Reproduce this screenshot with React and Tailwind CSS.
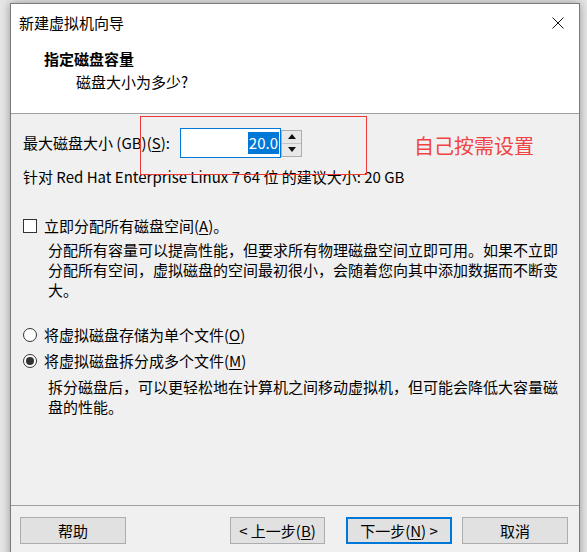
import React from "react";

const U = ({ children }) => <span className="underline underline-offset-2">{children}</span>;

function Btn({ w, children, primary, extra = "" }) {
  return (
    <div
      className={`h-[27px] ${w} ${extra} flex items-center justify-center bg-[#e1e1e1] text-[15px] leading-[20px] ${
        primary ? "border-2 border-[#0078d7]" : "border border-[#adadad]"
      }`}
    >
      {children}
    </div>
  );
}

export default function App() {
  return (
    <div className="w-[587px] h-[552px] overflow-hidden bg-[#e6e6e6] pl-[10px] pt-[3px] text-black font-['Noto_Sans_CJK_SC','Noto_Sans',sans-serif]">
      <div className="w-[570px] h-[570px] border border-[#7a7a7a] bg-[#f0f0f0] shadow-[0_0_9px_rgba(0,0,0,0.35)] flex flex-col">
        {/* header */}
        <div className="h-[110px] bg-white border-b border-[#a0a0a0] flex flex-col">
          <div className="h-[38px] flex items-center justify-between pl-[8px] pr-[15px]">
            <span className="text-[15px] leading-[20px]">新建虚拟机向导</span>
            <svg width="12" height="12" viewBox="0 0 12 12">
              <path d="M0.5 0.5 L11.5 11.5 M11.5 0.5 L0.5 11.5" stroke="#111" strokeWidth="1" />
            </svg>
          </div>
          <div className="mt-[7px] pl-[33px] text-[15px] leading-[20px] font-bold">指定磁盘容量</div>
          <div className="mt-[3px] pl-[65px] text-[15px] leading-[20px]">磁盘大小为多少?</div>
        </div>

        {/* body */}
        <div className="relative h-[391px] flex flex-col text-[15px] leading-[20px]">
          <div className="mt-[14px] h-[30px] flex items-center pl-[12px]">
            <span className="w-[157px]">
              最大磁盘大小 (GB)(<U>S</U>):
            </span>
            <div className="w-[101px] h-[30px] border border-[#0078d7] bg-white flex items-center justify-end pr-[1px]">
              <span className="bg-[#0078d7] text-white leading-[22px] px-[1px]">20.0</span>
            </div>
            <div className="w-[21px] h-[27px] border border-[#adadad] bg-[#e8e8e8] flex flex-col">
              <div className="flex-1 flex items-center justify-center border-b border-[#c4c4c4]">
                <svg width="8" height="5" viewBox="0 0 8 5">
                  <path d="M0 5 L4 0 L8 5 Z" fill="#111" />
                </svg>
              </div>
              <div className="flex-1 flex items-center justify-center">
                <svg width="8" height="5" viewBox="0 0 8 5">
                  <path d="M0 0 L8 0 L4 5 Z" fill="#111" />
                </svg>
              </div>
            </div>
          </div>

          <div className="mt-[9px] pl-[12px]">针对 Red Hat Enterprise Linux 7 64 位 的建议大小: 20 GB</div>

          <div className="mt-[29px] h-[20px] flex items-center pl-[12px]">
            <div className="w-[14px] h-[14px] border border-[#333] bg-white" />
            <span className="ml-[7px]">
              立即分配所有磁盘空间(<U>A</U>)。
            </span>
          </div>
          <div className="mt-[4px] ml-[37px] w-[522px]">
            分配所有容量可以提高性能，但要求所有物理磁盘空间立即可用。如果不立即分配所有空间，虚拟磁盘的空间最初很小，会随着您向其中添加数据而不断变大。
          </div>

          <div className="mt-[25px] h-[20px] flex items-center pl-[12px]">
            <div className="w-[14px] h-[14px] rounded-full border border-[#333] bg-white" />
            <span className="ml-[7px]">
              将虚拟磁盘存储为单个文件(<U>O</U>)
            </span>
          </div>
          <div className="mt-[6px] h-[20px] flex items-center pl-[12px]">
            <div className="w-[14px] h-[14px] rounded-full border border-[#333] bg-white flex items-center justify-center">
              <div className="w-[8px] h-[8px] rounded-full bg-[#333]" />
            </div>
            <span className="ml-[7px]">
              将虚拟磁盘拆分成多个文件(<U>M</U>)
            </span>
          </div>
          <div className="mt-[6px] ml-[37px] w-[522px]">
            拆分磁盘后，可以更轻松地在计算机之间移动虚拟机，但可能会降低大容量磁盘的性能。
          </div>

          {/* annotations */}
          <div className="absolute left-[129px] top-[2px] w-[227px] h-[59px] border border-[#f03a3a]" />
          <div className="absolute left-[403px] top-[18px] text-[20px] leading-[28px] text-[#f04444]">自己按需设置</div>
        </div>

        {/* footer */}
        <div className="border-t border-[#a0a0a0] pt-[11px] pl-[9px] flex">
          <Btn w="w-[106px]">帮助</Btn>
          <Btn w="w-[95px]" extra="ml-[104px]">
            &lt; 上一步(<U>B</U>)
          </Btn>
          <Btn w="w-[106px]" extra="ml-[21px]" primary>
            下一步(<U>N</U>) &gt;
          </Btn>
          <Btn w="w-[106px]" extra="ml-[10px]">取消</Btn>
        </div>
      </div>
    </div>
  );
}
